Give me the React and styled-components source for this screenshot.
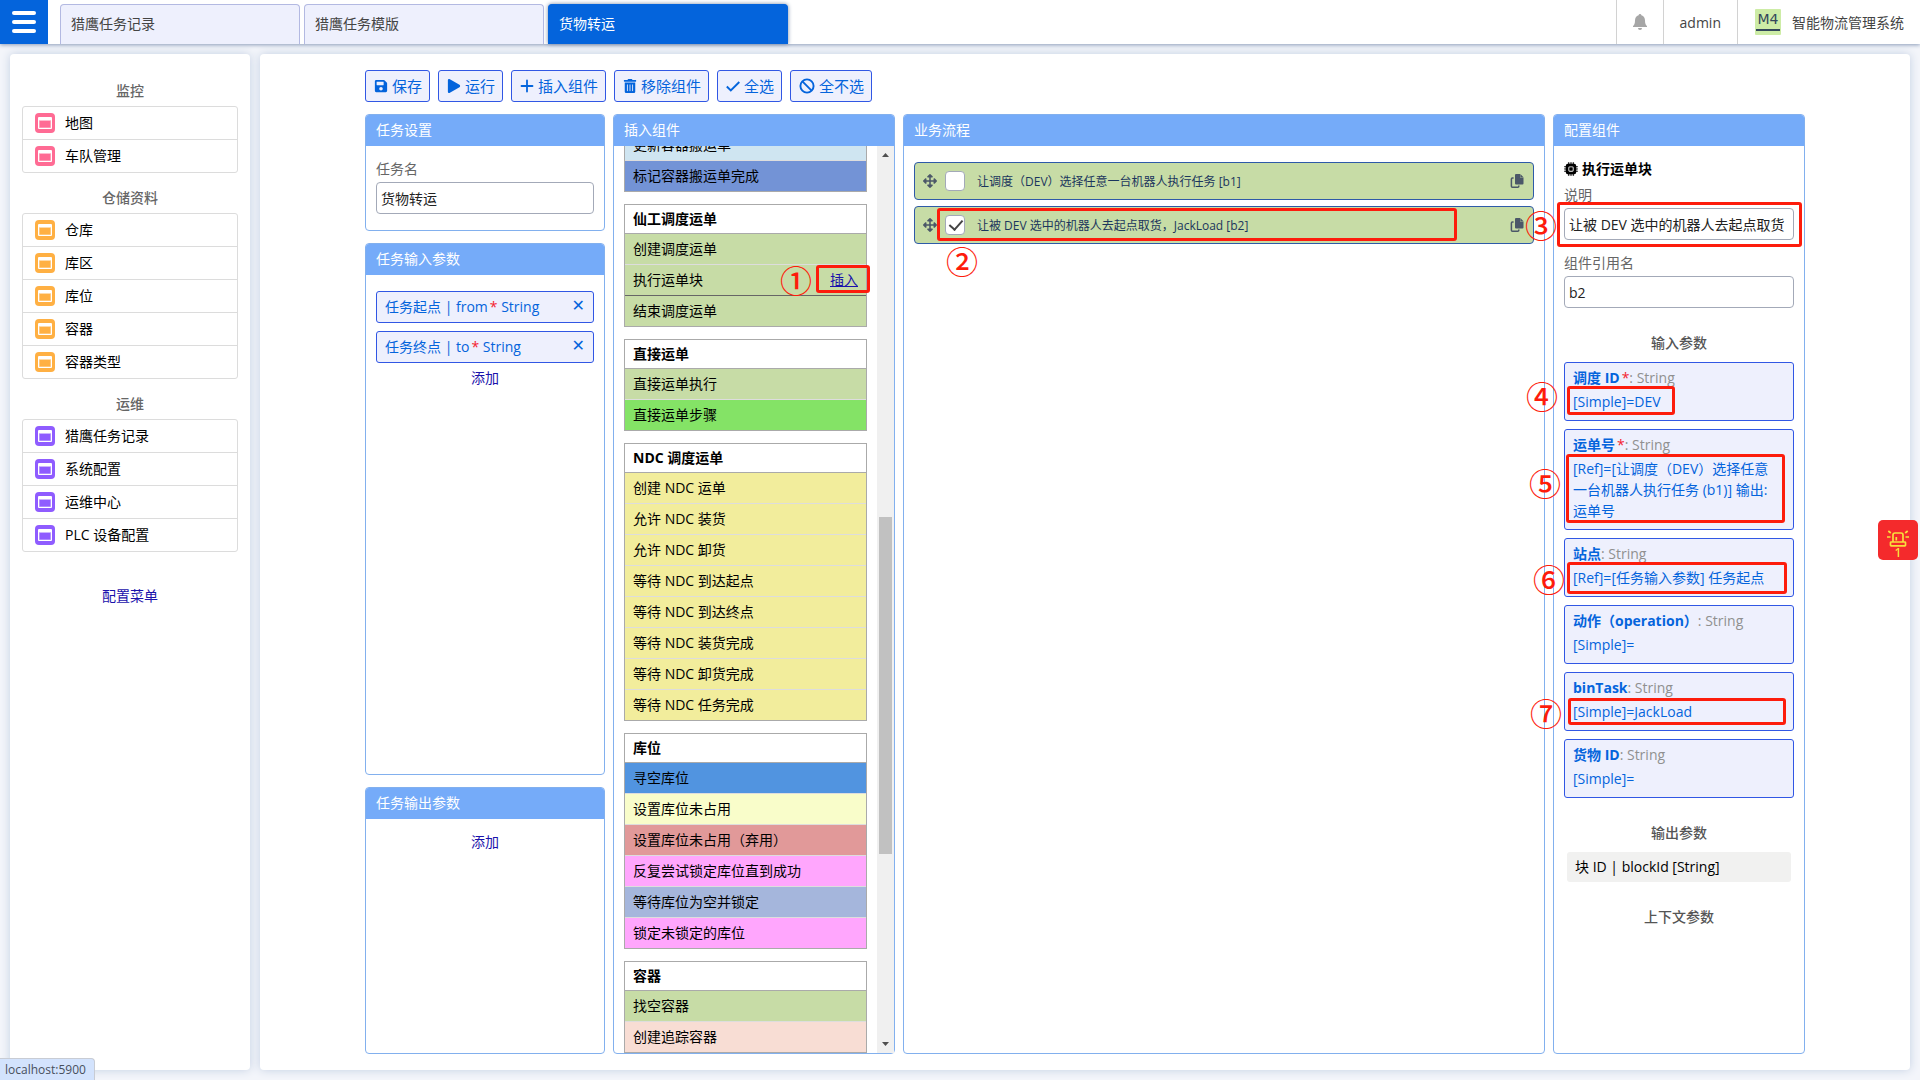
import React, { useLayoutEffect, useRef, useState } from 'react'
import styled, { createGlobalStyle, css } from 'styled-components';
import { FaSave, FaPlay, FaTrashAlt, FaArrowsAlt } from 'react-icons/fa';
import { BsCpuFill } from 'react-icons/bs';


const tabs = ['猎鹰任务记录', '猎鹰任务模版', '货物转运'];

const menus = [
  { title: '监控', color: '#ff6b94', items: ['地图', '车队管理'] },
  { title: '仓储资料', color: '#ffb043', items: ['仓库', '库区', '库位', '容器', '容器类型'] },
  { title: '运维', color: '#8f5cff', items: ['猎鹰任务记录', '系统配置', '运维中心', 'PLC 设备配置'] },
];

const GREEN = '#c7dca6';
const YELLOW = '#f2ed9c';
const PINK = '#ffa6fd';

const blockGroups = [
  {
    items: [
      { label: '更新容器搬运单', color: '#cfe5f1' },
      { label: '标记容器搬运单完成', color: '#7393d6' },
    ],
  },
  {
    title: '仙工调度运单',
    items: [
      { label: '创建调度运单', color: GREEN },
      { label: '执行运单块', color: GREEN, active: true },
      { label: '结束调度运单', color: GREEN },
    ],
  },
  {
    title: '直接运单',
    items: [
      { label: '直接运单执行', color: GREEN },
      { label: '直接运单步骤', color: '#84e366' },
    ],
  },
  {
    title: 'NDC 调度运单',
    items: [
      { label: '创建 NDC 运单', color: YELLOW },
      { label: '允许 NDC 装货', color: YELLOW },
      { label: '允许 NDC 卸货', color: YELLOW },
      { label: '等待 NDC 到达起点', color: YELLOW },
      { label: '等待 NDC 到达终点', color: YELLOW },
      { label: '等待 NDC 装货完成', color: YELLOW },
      { label: '等待 NDC 卸货完成', color: YELLOW },
      { label: '等待 NDC 任务完成', color: YELLOW },
    ],
  },
  {
    title: '库位',
    items: [
      { label: '寻空库位', color: '#5194e0' },
      { label: '设置库位未占用', color: '#f9fdca' },
      { label: '设置库位未占用（弃用）', color: '#e19999' },
      { label: '反复尝试锁定库位直到成功', color: PINK },
      { label: '等待库位为空并锁定', color: '#a5b6dc' },
      { label: '锁定未锁定的库位', color: PINK },
    ],
  },
  {
    title: '容器',
    items: [
      { label: '找空容器', color: GREEN },
      { label: '创建追踪容器', color: '#f8ddd4' },
    ],
  },
];

const inputParams = [
  { label: '调度 ID', required: true, value: '[Simple]=DEV', mark: { no: '④', box: '-5px auto -3px -6px', width: '108px', at: '-31px', top: '4px' } },
  { label: '运单号', required: true, value: '[Ref]=[让调度（DEV）选择任意一台机器人执行任务 (b1)] 输出: 运单号', mark: { no: '⑤', box: '-4px 0 -2px -7px', at: '-28px', top: '24px' } },
  { label: '站点', value: '[Ref]=[任务输入参数] 任务起点', mark: { no: '⑥', box: '-5px -2px -6px -6px', at: '-24px' } },
  { label: '动作（operation）', value: '[Simple]=' },
  { label: 'binTask', value: '[Simple]=JackLoad', mark: { no: '⑦', box: '-3px -1px -3px -5px', at: '-27px' } },
  { label: '货物 ID', value: '[Simple]=' },
];

const WindowIcon = ({ color }) => (
  <svg width="20" height="20" viewBox="0 0 20 20" aria-hidden="true">
    <rect width="20" height="20" rx="4" fill={color} />
    <path d="M3 5a1 1 0 0 1 1-1h12a1 1 0 0 1 1 1v10a1 1 0 0 1-1 1H4a1 1 0 0 1-1-1z" fill="#fff" />
    <path d="M4 7h12v8H4z" fill={color} fillOpacity=".45" />
    <path d="M4.600 8h10.800v6.500H4.600z" fill={color} />
  </svg>
)

const PlusIcon = () => (
  <svg viewBox="0 0 14 14" fill="none" stroke="currentColor" strokeWidth="1.8" strokeLinecap="round" aria-hidden="true">
    <path d="M7 1.500v11M1.500 7h11" />
  </svg>
)

const CheckIcon = () => (
  <svg viewBox="0 0 14 14" fill="none" stroke="currentColor" strokeWidth="1.9" aria-hidden="true">
    <path d="M.8 7.500l4 4L13.300 3" />
  </svg>
)

const BanIcon = () => (
  <svg viewBox="0 0 16 16" fill="none" stroke="currentColor" strokeWidth="1.900" aria-hidden="true">
    <circle cx="8" cy="8" r="6.600" />
    <path d="M3.400 3.400l9.200 9.200" />
  </svg>
)

const CopyIcon = () => (
  <svg width="14" height="14" viewBox="0 0 14 14" aria-hidden="true">
    <path d="M6 0h4v3.500h3.500V9.500a1 1 0 0 1-1 1H6a1 1 0 0 1-1-1V1a1 1 0 0 1 1-1z" fill="#4b5768" />
    <path d="M10.300 0l3.200 3.200h-3.200z" fill="#4b5768" />
    <path d="M3.600 4H2.400a1 1 0 0 0-1 1v7.200a1 1 0 0 0 1 1h5.400a1 1 0 0 0 1-1v-.6" fill="none" stroke="#4b5768" strokeWidth="1.5" />
  </svg>
)

const BellIcon = () => (
  <svg width="14" height="18" viewBox="1 0 14 18" aria-hidden="true">
    <path d="M8 1a1.400 1.400 0 0 1 1.400 1.300C11.900 3 13 5 13 7.500c0 3 .7 4.500 2 5.500v1H1v-1c1.300-1 2-2.500 2-5.500C3 5 4.100 3 6.600 2.300A1.400 1.400 0 0 1 8 1z" fill="#a6a6a6" />
    <path d="M6 15h4a2 2 0 0 1-4 0z" fill="#a6a6a6" />
  </svg>
)

const AlarmIcon = () => (
  <svg width="24" height="18" viewBox="0 0 24 18" fill="none" stroke="#f8e03c" strokeWidth="1.7" aria-hidden="true">
    <path d="M7 13V6a2 2 0 0 1 2-2h6a2 2 0 0 1 2 2v7" />
    <rect x="4.500" y="13" width="15" height="3.800" rx=".6" />
    <path d="M10.300 11.500V8M1 8h3.500M19.500 8H23M2.300 2l2.500 2M21.700 2l-2.500 2" />
  </svg>
)

const Arrow = ({ down }) => (
  <svg width="7" height="4" viewBox="0 0 7 4" aria-hidden="true">
    <path d={down ? 'M0 0h7L3.500 4z' : 'M0 4h7L3.500 0z'} fill="#505050" />
  </svg>
)

const Param = ({ label, required, value, mark }) => (
  <ParamCard type="button">
    <span>
      <strong>{label}</strong>
      {required && <Star>*</Star>}
      <ParamType>: String</ParamType>
    </span>
    <ParamValue>
      {value}
      {
        mark && <>
          <MarkBox $box={mark.box} $width={mark.width} />
          <MarkNo $left={mark.at} $top={mark.top}>{mark.no}</MarkNo>
        </>
      }
    </ParamValue>
  </ParamCard>
)

const BlockList = () => {

  const listRef = useRef(null);

  useLayoutEffect(() => {
    listRef.current.scrollTop = 17;
  }, []);

  return (
    <ScrollArea>
      <Groups ref={listRef}>
        {
          blockGroups.map(({ title, items }, i) =>
            <Group key={i}>
              {title && <GroupTitle>{title}</GroupTitle>}
              {
                items.map(({ label, color, active }) =>
                  <Block key={label} $color={color} $active={active}>
                    {label}
                    {
                      active && <Insert href="#insert">
                        插入
                        <MarkBox $box="-4px -12px -4px -14px" />
                        <MarkNo $left="-34px">①</MarkNo>
                      </Insert>
                    }
                  </Block>
                )
              }
            </Group>
          )
        }
      </Groups>
      <Track>
        <Arrow />
        <Rail>
          <Thumb />
        </Rail>
        <Arrow down />
      </Track>
    </ScrollArea>
  )
}

const App = () => {

  const [taskName, setTaskName] = useState('货物转运');
  const [remark, setRemark] = useState('让被 DEV 选中的机器人去起点取货');
  const [refName, setRefName] = useState('b2');
  const [checked, setChecked] = useState({ b1: false, b2: true });

  const toggle = (id) => setChecked({ ...checked, [id]: !checked[id] });

  return (
    <Page>
      <GlobalStyle />
      <Header>
        <MenuButton type="button" aria-label="菜单"><i /><i /><i /></MenuButton>
        <Tabs>
          {
            tabs.map((tab, i) => <Tab key={tab} type="button" $active={i === 2}>{tab}</Tab>)
          }
        </Tabs>
        <HeaderButton type="button" aria-label="通知"><BellIcon /></HeaderButton>
        <HeaderButton type="button">admin</HeaderButton>
        <Brand><Logo>M4</Logo>智能物流管理系统</Brand>
      </Header>

      <Body>
        <Sidebar>
          {
            menus.map(({ title, color, items }) =>
              <Menu key={title}>
                <h2>{title}</h2>
                <ul>
                  {
                    items.map((item) =>
                      <li key={item}><a href="#menu"><WindowIcon color={color} />{item}</a></li>
                    )
                  }
                </ul>
              </Menu>
            )
          }
          <ConfigLink href="#config">配置菜单</ConfigLink>
        </Sidebar>

        <Main>
          <Workspace>
            <Toolbar>
              <ToolButton type="button"><FaSave />保存</ToolButton>
              <ToolButton type="button"><FaPlay />运行</ToolButton>
              <ToolButton type="button"><PlusIcon />插入组件</ToolButton>
              <ToolButton type="button"><FaTrashAlt />移除组件</ToolButton>
              <ToolButton type="button"><CheckIcon />全选</ToolButton>
              <ToolButton type="button" $icon="16px"><BanIcon />全不选</ToolButton>
            </Toolbar>

            <Columns>
              <Stack>
                <Panel>
                  <PanelTitle>任务设置</PanelTitle>
                  <PanelBody>
                    <Field>
                      <label htmlFor="taskName">任务名</label>
                      <input id="taskName" value={taskName} onChange={(e) => setTaskName(e.target.value)} />
                    </Field>
                  </PanelBody>
                </Panel>
                <Panel $grow={2}>
                  <PanelTitle>任务输入参数</PanelTitle>
                  <TagList>
                    <Tag>任务起点 | from<Star>*</Star> String<TagRemove type="button" aria-label="删除">✕</TagRemove></Tag>
                    <Tag>任务终点 | to<Star>*</Star> String<TagRemove type="button" aria-label="删除">✕</TagRemove></Tag>
                    <AddLink href="#add-input">添加</AddLink>
                  </TagList>
                </Panel>
                <Panel $grow={1}>
                  <PanelTitle>任务输出参数</PanelTitle>
                  <PanelBody>
                    <AddLink href="#add-output">添加</AddLink>
                  </PanelBody>
                </Panel>
              </Stack>

              <Panel>
                <PanelTitle>插入组件</PanelTitle>
                <BlockList />
              </Panel>

              <Panel>
                <PanelTitle>业务流程</PanelTitle>
                <Flow>
                  <Step>
                    <FaArrowsAlt />
                    <label>
                      <CheckBox type="checkbox" checked={checked.b1} onChange={() => toggle('b1')} />
                      让调度（DEV）选择任意一台机器人执行任务 [b1]
                    </label>
                    <IconButton type="button" aria-label="复制"><CopyIcon /></IconButton>
                  </Step>
                  <Step>
                    <FaArrowsAlt />
                    <label>
                      <CheckBox type="checkbox" checked={checked.b2} onChange={() => toggle('b2')} />
                      让被 DEV 选中的机器人去起点取货，JackLoad [b2]
                    </label>
                    <IconButton type="button" aria-label="复制"><CopyIcon /></IconButton>
                    <MarkBox $box="1px 76px 2px 22px" />
                    <MarkNo $left="47px" $top="53px">②</MarkNo>
                  </Step>
                </Flow>
              </Panel>

              <Panel>
                <PanelTitle>配置组件</PanelTitle>
                <PanelBody>
                  <BlockName><BsCpuFill />执行运单块</BlockName>
                  <Field>
                    <label htmlFor="remark">说明</label>
                    <InputWrap>
                      <input id="remark" value={remark} onChange={(e) => setRemark(e.target.value)} />
                      <MarkBox $box="-6px -8px -7px -7px" />
                      <MarkNo $left="-23px">③</MarkNo>
                    </InputWrap>
                  </Field>
                  <Field>
                    <label htmlFor="refName">组件引用名</label>
                    <input id="refName" value={refName} onChange={(e) => setRefName(e.target.value)} />
                  </Field>
                  <Section>输入参数</Section>
                  <Params>
                    {
                      inputParams.map((param) => <Param key={param.label} {...param} />)
                    }
                  </Params>
                  <Section>输出参数</Section>
                  <Output>块 ID | blockId [String]</Output>
                  <Section>上下文参数</Section>
                </PanelBody>
              </Panel>
            </Columns>
          </Workspace>
        </Main>
      </Body>

      <AlarmButton type="button" aria-label="告警"><AlarmIcon /><span>1</span></AlarmButton>
      <StatusBar>localhost:5900</StatusBar>
    </Page>
  )
}

export default App

const GlobalStyle = createGlobalStyle`
  * {
    box-sizing: border-box;
  }

  body {
    margin: 0;
    background: #f3f5fa;
    color: #000;
    font: 14px/21px "Open Sans", "Noto Sans CJK SC", sans-serif;
  }

  button, input {
    font: inherit;
    color: inherit;
  }

  button {
    cursor: pointer;
  }

  a {
    color: #1a12ab;
    text-decoration: none;
  }

  h1, h2, h3, ul {
    margin: 0;
    padding: 0;
    font-size: inherit;
    list-style: none;
  }
`;

const Page = styled.div`
  display: flex;
  flex-direction: column;
  height: 100vh;
`;

const Header = styled.header`
  display: flex;
  height: 44px;
  background: #fff;
  box-shadow: 0 1px 4px #8a9bb8;
  z-index: 1;
`;

const MenuButton = styled.button`
  display: flex;
  flex-direction: column;
  justify-content: center;
  gap: 5px;
  width: 48px;
  padding: 0 12px;
  border: 0;
  background: #0464dc;

  i {
    height: 4px;
    border-radius: 2px;
    background: #fff;
  }
`;

const Tabs = styled.nav`
  display: flex;
  flex: 1;
  gap: 4px;
  padding: 4px 12px 0;
`;

const Tab = styled.button`
  width: 240px;
  padding: 0 10px 2px;
  border: 1px solid #b3b9e2;
  border-bottom: 0;
  border-radius: 4px 4px 0 0;
  background: #eef0fd;
  color: #444;
  text-align: left;

  ${({ $active }) => $active && css`
    border-color: #0464dc;
    background: #0464dc;
    color: #fff;
    box-shadow: 0 0 4px #7a8aa8;
  `}
`;

const HeaderButton = styled.button`
  display: flex;
  align-items: center;
  padding: 0 16px;
  border: 0;
  border-left: 1px solid #d2d2d2;
  background: none;
  color: #444;
`;

const Brand = styled.div`
  display: flex;
  align-items: center;
  gap: 11px;
  padding: 0 16px 0 17px;
  border-left: 1px solid #d2d2d2;
  color: #444;
`;

const Logo = styled.span`
  width: 26px;
  height: 26px;
  padding: 1px;
  border-radius: 1px;
  background: #cdeca6;
  color: #33475b;
  font: 14px/19px "DejaVu Sans", sans-serif;
  text-align: center;

  &::after {
    content: '';
    display: block;
    height: 2px;
    background: #33475b;
  }
`;

const Body = styled.div`
  display: flex;
  flex: 1;
  gap: 10px;
  min-height: 0;
  padding: 10px;
`;

const card = css`
  border-radius: 4px;
  background: #fff;
  box-shadow: 0 0 10px #c3cfe2;
`;

const Sidebar = styled.aside`
  ${card}
  display: flex;
  flex-direction: column;
  gap: 14px;
  flex: 0 0 240px;
  padding: 26px 12px;
`;

const Menu = styled.section`
  h2 {
    padding-bottom: 5px;
    color: #666;
    font-weight: 500;
    text-align: center;
  }

  ul {
    border: 1px solid #dcdcdc;
    border-radius: 3px;
  }

  li + li {
    border-top: 1px solid #dcdcdc;
  }

  a {
    display: flex;
    align-items: center;
    gap: 10px;
    height: 32px;
    padding: 0 12px 1px;
    color: #000;
  }
`;

const ConfigLink = styled.a`
  align-self: center;
  padding-top: 19px;
`;

const Main = styled.main`
  ${card}
  flex: 1;
  min-width: 0;
  padding: 16px;
`;

const Workspace = styled.div`
  display: flex;
  flex-direction: column;
  gap: 12px;
  max-width: 1440px;
  height: 100%;
  margin: 0 auto;
`;

const Toolbar = styled.div`
  display: flex;
  gap: 8px;
`;

const ToolButton = styled.button`
  display: flex;
  align-items: center;
  gap: 4px;
  height: 32px;
  padding: 0 7px 0 8px;
  border: 1px solid #3157e4;
  border-radius: 3px;
  background: #eef0fd;
  color: #0464dc;
  font-size: 15px;

  svg {
    width: ${({ $icon }) => $icon || '14px'};
    height: ${({ $icon }) => $icon || '14px'};
  }
`;

const Columns = styled.div`
  display: grid;
  grid-template-columns: 240px 282px minmax(0, 1fr) 252px;
  gap: 8px;
  flex: 1;
  min-height: 0;
`;

const Stack = styled.div`
  display: flex;
  flex-direction: column;
  gap: 12px;
`;

const Panel = styled.section`
  display: flex;
  flex-direction: column;
  flex: ${({ $grow }) => $grow ? `${$grow} 0 0` : '0 0 auto'};
  min-height: 0;
  border: 1px solid #82b0ee;
  border-radius: 4px;
`;

const PanelTitle = styled.h2`
  padding: 4px 10px 6px;
  border-radius: 3px 3px 0 0;
  background: #75abf9;
  color: #fff;
  font-weight: 400;
`;

const PanelBody = styled.div`
  padding: 12px 10px 16px;
`;

const Field = styled.div`
  display: flex;
  flex-direction: column;
  gap: 3px;

  & + & {
    margin-top: 12px;
  }

  label {
    color: #666;
  }

  input {
    width: 100%;
    height: 32px;
    padding: 0 4px;
    border: 1px solid #a3a9b8;
    border-radius: 4px;
    outline: 0;
    background: #fff;
    color: #222;
  }
`;

const InputWrap = styled.div`
  position: relative;
`;

const TagList = styled.div`
  padding: 16px 10px;
`;

const Tag = styled.div`
  display: flex;
  align-items: center;
  height: 32px;
  padding: 0 8px 2px;
  border: 1px solid #3157e4;
  border-radius: 3px;
  background: #eef0fd;
  color: #0464dc;
  white-space: pre;

  & + & {
    margin-top: 8px;
  }
`;

const TagRemove = styled.button`
  margin-left: auto;
  padding: 0;
  border: 0;
  background: none;
  font: bold 16px/20px "DejaVu Sans", sans-serif;
`;

const Star = styled.span`
  padding-left: 2px;
  color: #f5222d;
`;

const AddLink = styled.a`
  display: block;
  text-align: center;

  ${Tag} + & {
    padding-top: 4px;
  }
`;

const ScrollArea = styled.div`
  display: flex;
  flex: 1;
  min-height: 0;
`;

const Groups = styled.div`
  display: flex;
  flex-direction: column;
  flex: 1;
  gap: 12px;
  padding: 0 10px;
  overflow-y: scroll;
  scrollbar-width: none;
`;

const Group = styled.div`
  flex: none;
  border: 1px solid #aaa;
`;

const GroupTitle = styled.h3`
  height: 29px;
  padding: 3px 8px;
  border-bottom: 1px solid #aaa;
`;

const Block = styled.div`
  display: flex;
  justify-content: space-between;
  height: 31px;
  padding: 4px 8px;
  border-bottom: 1px solid ${({ $active }) => $active ? '#666' : '#ddd'};
  background: ${({ $color }) => $color};

  &:last-child {
    height: 30px;
    border-bottom: 0;
  }
`;

const Insert = styled.a`
  position: relative;
  height: 20px;
  text-decoration: underline;
`;

const Track = styled.div`
  display: flex;
  flex-direction: column;
  align-items: center;
  flex: 0 0 17px;
  padding: 7px 0;
  background: #f0f0f0;
`;

const Rail = styled.div`
  display: flex;
  flex-direction: column;
  flex: 1;
  width: 13px;
  padding: 6px 0;

  &::before {
    content: '';
    flex: 354;
  }

  &::after {
    content: '';
    flex: 182;
  }
`;

const Thumb = styled.div`
  flex: 338;
  background: #c1c1c1;
`;

const Flow = styled.div`
  display: flex;
  flex-direction: column;
  gap: 6px;
  padding: 16px 10px;
`;

const Step = styled.div`
  position: relative;
  display: flex;
  align-items: center;
  gap: 8px;
  height: 38px;
  padding: 0 9px 0 8px;
  border: 1px solid #2e5aa8;
  border-radius: 4px;
  background: ${GREEN};
  color: #1b365d;
  font-size: 12px;

  > svg {
    width: 14px;
    height: 14px;
    color: #4b5768;
  }

  label {
    display: flex;
    align-items: center;
    flex: 1;
    gap: 12px;
  }
`;

const CheckBox = styled.input`
  appearance: none;
  width: 20px;
  height: 20px;
  margin: 0;
  border: 1px solid #a3a9b8;
  border-radius: 4px;
  background: #fff;

  &:checked::before {
    content: '';
    display: block;
    width: 6px;
    height: 11px;
    margin: 1px 6px;
    border: solid #444;
    border-width: 0 2px 2px 0;
    transform: rotate(42deg);
  }
`;

const IconButton = styled.button`
  display: flex;
  padding: 0;
  border: 0;
  background: none;
`;

const BlockName = styled.h3`
  display: flex;
  align-items: center;
  gap: 4px;
  padding-bottom: 5px;
`;

const Section = styled.h3`
  padding: 24px 0 8px;
  color: #555;
  font-weight: 500;
  line-height: 22px;
  text-align: center;
`;

const Params = styled.div`
  display: flex;
  flex-direction: column;
  gap: 8px;
`;

const ParamCard = styled.button`
  display: flex;
  flex-direction: column;
  gap: 3px;
  padding: 4px 8px 8px;
  border: 1px solid #3157e4;
  border-radius: 3px;
  background: #eef0fd;
  color: #0464dc;
  text-align: left;
`;

const ParamType = styled.span`
  color: #909090;
`;

const ParamValue = styled.span`
  position: relative;
  width: 100%;
  padding-right: 8px;
`;

const Output = styled.div`
  margin: 0 3px;
  padding: 4px 8px 5px;
  border-radius: 3px;
  background: #f1f1f0;
`;

/* red call-outs laid over the form */
const MarkBox = styled.span`
  position: absolute;
  inset: ${({ $box }) => $box};
  width: ${({ $width }) => $width || 'auto'};
  border: 3px solid #fd1c0c;
  border-radius: 3px;
  pointer-events: none;
`;

const MarkNo = styled.span`
  position: absolute;
  top: ${({ $top }) => $top || '50%'};
  left: ${({ $left }) => $left};
  transform: translate(-50%, -50%);
  color: #fd1c0c;
  font: 500 32px/32px "Noto Sans CJK SC", sans-serif;
  pointer-events: none;
`;

const AlarmButton = styled.button`
  position: fixed;
  top: 520px;
  right: 2px;
  display: flex;
  flex-direction: column;
  align-items: center;
  width: 40px;
  height: 40px;
  padding: 9px 0 0;
  border: 0;
  border-radius: 5px;
  background: #f42a2c;
  color: #f8e03c;
  font-size: 12px;
  font-weight: 600;
  line-height: 12px;
  z-index: 2;
`;

const StatusBar = styled.div`
  position: fixed;
  left: 0;
  bottom: 0;
  padding: 1px 8px 0 5px;
  border: solid #c8ccd4;
  border-width: 1px 1px 0 0;
  border-radius: 0 4px 0 0;
  background: #d3e3fd;
  color: #47505e;
  font-size: 12px;
  line-height: 20px;
  z-index: 2;
`;
